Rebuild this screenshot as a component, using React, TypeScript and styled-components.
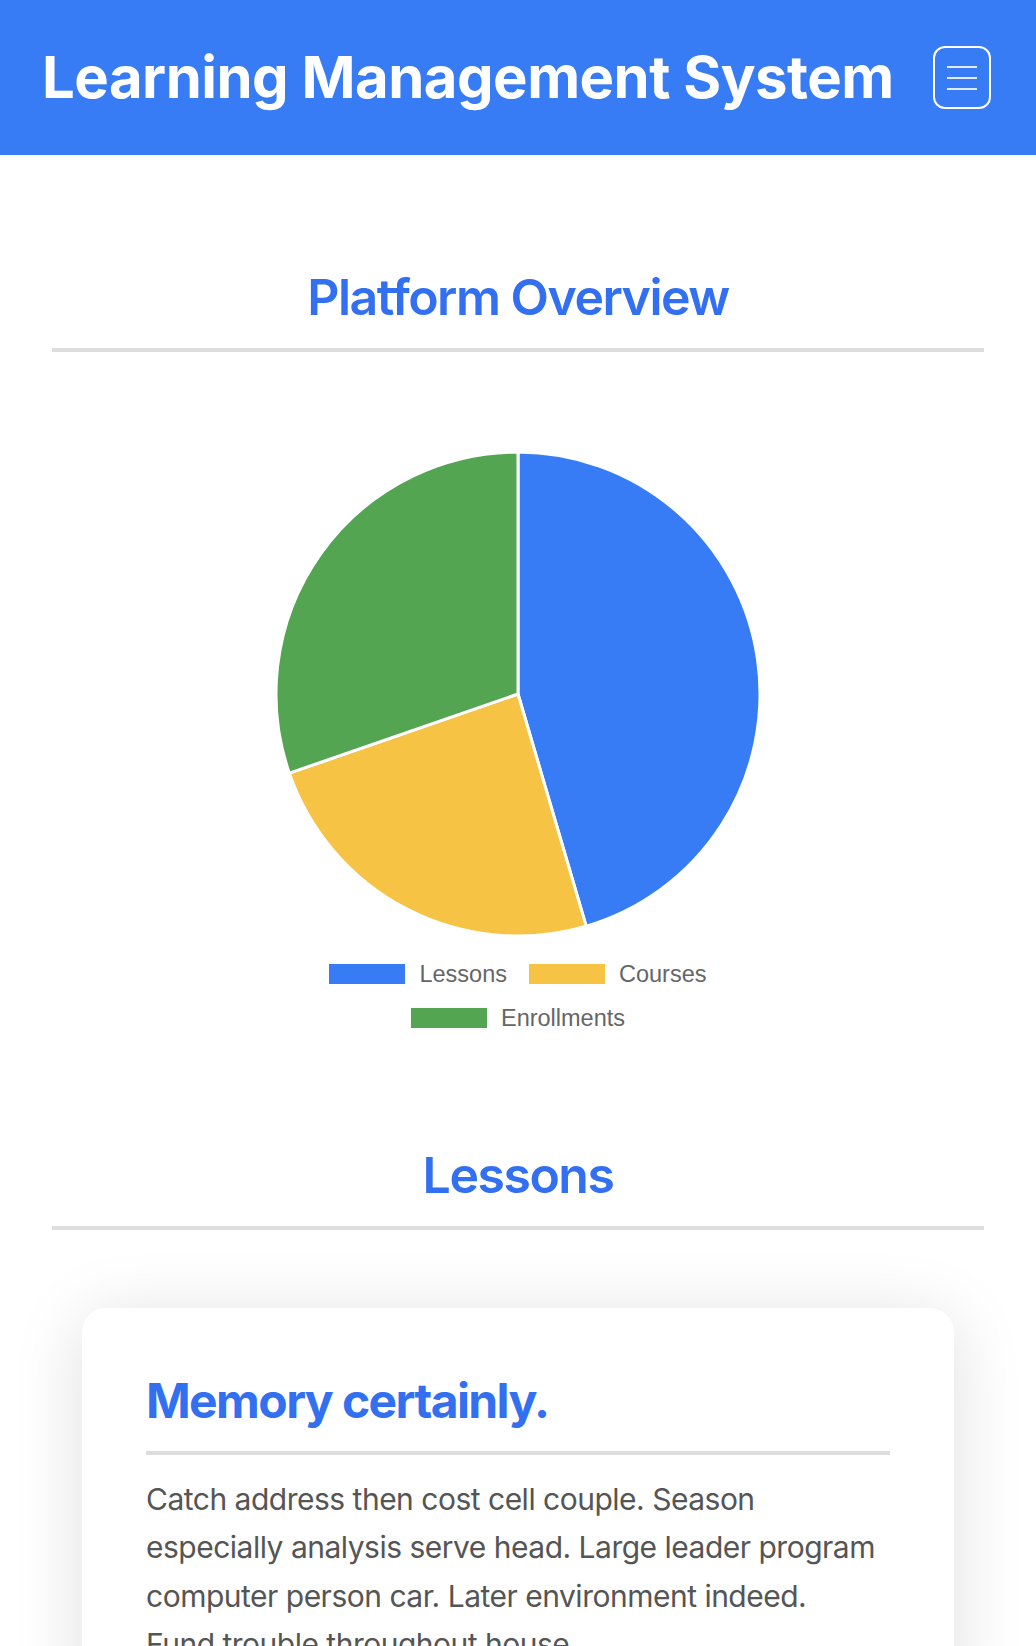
import * as React from 'react'
import styled, { createGlobalStyle } from 'styled-components'

const GlobalStyle = createGlobalStyle`
  html, body {
    margin: 0;
    padding: 0;
    background: #ffffff;
    font-family: Inter, "Noto Sans", "DejaVu Sans", sans-serif;
  }
  * {
    box-sizing: border-box;
  }
`

const BLUE = '#387cf5'
const HEADING_BLUE = '#3370f1'

// Top navigation bar
const Header = styled.header`
  height: 155px;
  background-color: ${BLUE};
  display: flex;
  align-items: center;
  justify-content: space-between;
  padding: 0 45px 0 42px;
`

const Title = styled.h1`
  margin: 0;
  color: #ffffff;
  font-size: 58px;
  font-weight: 700;
  line-height: 1.2;
  letter-spacing: -0.5px;
`

const MenuButton = styled.button`
  width: 58px;
  height: 63px;
  border: 2px solid #ffffff;
  border-radius: 12px;
  background: transparent;
  display: flex;
  flex-direction: column;
  align-items: center;
  justify-content: center;
  gap: 9px;
  padding: 0;
  cursor: pointer;
`

const MenuLine = styled.span`
  display: block;
  width: 30px;
  height: 2px;
  background-color: rgba(255, 255, 255, 0.85);
`

const Main = styled.main`
  padding: 0 52px 80px;
`

type SectionProps = {
  top: number
}

const Section = styled.section<SectionProps>`
  padding-top: ${props => props.top}px;
`

const SectionHeading = styled.h2`
  margin: 0;
  text-align: center;
  color: ${HEADING_BLUE};
  font-size: 50px;
  font-weight: 600;
  line-height: 60px;
  letter-spacing: -1.5px;
  padding-bottom: 21px;
  border-bottom: 4px solid #dddddd;
`

const ChartWrap = styled.div`
  display: flex;
  flex-direction: column;
  align-items: center;
  padding-top: 98px;
`

const Legend = styled.div`
  display: flex;
  flex-wrap: wrap;
  justify-content: center;
  width: 420px;
  column-gap: 22px;
  row-gap: 24px;
  margin-top: 26px;
  font-family: "Liberation Sans", Arial, sans-serif;
  font-size: 23.5px;
  color: #666666;
`

const LegendItem = styled.div`
  display: flex;
  align-items: center;
  gap: 14px;
  height: 20px;
`

type SwatchProps = {
  color: string
}

const Swatch = styled.span<SwatchProps>`
  display: block;
  width: 76px;
  height: 20px;
  background-color: ${props => props.color};
`

const CardList = styled.div`
  padding: 78px 30px 0;
`

const Card = styled.article`
  background: #ffffff;
  border-radius: 24px;
  padding: 64px 64px 40px;
  box-shadow: 0 10px 70px rgba(0, 0, 0, 0.13);
`

const CardTitle = styled.h3`
  margin: 0;
  color: ${HEADING_BLUE};
  font-size: 48px;
  font-weight: 700;
  line-height: 1.2;
  letter-spacing: -1.6px;
  padding-bottom: 21px;
  border-bottom: 4px solid #dddddd;
`

const CardText = styled.p`
  margin: 20px 0 0;
  padding-right: 10px;
  color: #555555;
  font-size: 30px;
  line-height: 48.5px;
  letter-spacing: -0.5px;
`

const slices = [
  { label: 'Lessons', value: 15, color: '#387cf5' },
  { label: 'Courses', value: 8, color: '#f6c344' },
  { label: 'Enrollments', value: 10, color: '#53a552' },
]

const PieChart: React.FC<{ size: number }> = ({ size }) => {
  const r = size / 2 - 2
  const c = size / 2
  const total = slices.reduce((s, x) => s + x.value, 0)
  let angle = -Math.PI / 2
  return (
    <svg width={size} height={size} viewBox={`0 0 ${size} ${size}`}>
      {slices.map(s => {
        const start = angle
        const end = angle + (s.value / total) * Math.PI * 2
        angle = end
        const x1 = c + r * Math.cos(start)
        const y1 = c + r * Math.sin(start)
        const x2 = c + r * Math.cos(end)
        const y2 = c + r * Math.sin(end)
        const large = end - start > Math.PI ? 1 : 0
        const d = `M ${c} ${c} L ${x1} ${y1} A ${r} ${r} 0 ${large} 1 ${x2} ${y2} Z`
        return <path key={s.label} d={d} fill={s.color} stroke="#ffffff" strokeWidth={3} strokeLinejoin="round" />
      })}
    </svg>
  )
}

export default function App() {
  return (
    <>
      <GlobalStyle />
      <Header>
        <Title>Learning Management System</Title>
        <MenuButton aria-label="Menu">
          <MenuLine />
          <MenuLine />
          <MenuLine />
        </MenuButton>
      </Header>
      <Main>
        <Section top={112}>
          <SectionHeading>Platform Overview</SectionHeading>
          <ChartWrap>
            <PieChart size={488} />
            <Legend>
              {slices.map(s => (
                <LegendItem key={s.label}>
                  <Swatch color={s.color} />
                  {s.label}
                </LegendItem>
              ))}
            </Legend>
          </ChartWrap>
        </Section>
        <Section top={117}>
          <SectionHeading>Lessons</SectionHeading>
          <CardList>
            <Card>
              <CardTitle>Memory certainly.</CardTitle>
              <CardText>
                Catch address then cost cell couple. Season especially analysis serve head. Large leader program
                computer person car. Later environment indeed. Fund trouble throughout house.
              </CardText>
            </Card>
          </CardList>
        </Section>
      </Main>
    </>
  )
}
